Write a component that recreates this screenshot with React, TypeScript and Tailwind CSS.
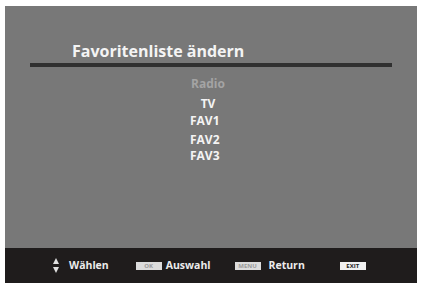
const font = { fontFamily: '"Open Sans", "Liberation Sans", sans-serif' }

function KeyBox({ label, dark }: { label: string; dark?: boolean }) {
  return (
    <span
      className={`flex h-[8px] w-[26px] items-center justify-center text-[6px] leading-none font-bold ${
        dark ? 'bg-[#f0f0f0] text-[#222]' : 'bg-[#dcdcdc] text-[#9a9a9a]'
      }`}
    >
      {label}
    </span>
  )
}

export default function App() {
  return (
    <div className="h-[284px] w-[421px] bg-white pt-[6px] pl-[5px]" style={font}>
      <div className="flex h-[277px] w-[412px] flex-col bg-[#787878]">
        <div className="flex-1">
          <h1 className="mt-[34px] ml-[67px] text-[16px] leading-[22px] font-bold text-[#f4f4f4]">
            Favoritenliste ändern
          </h1>
          <div className="mt-[1px] ml-[25px] h-[4px] w-[362px] bg-[#303030]" />
          <div className="mt-[10px] ml-[185px] flex w-[36px] flex-col text-[12px] leading-[13px] font-bold">
            <span className="text-center text-[#a4a4a4]">Radio</span>
            <span className="mt-[7px] text-center text-[#f4f4f4]">TV</span>
            <span className="mt-[4px] text-[#f4f4f4]">FAV1</span>
            <span className="mt-[5px] leading-[16px] text-[#f4f4f4]">FAV2</span>
            <span className="leading-[16px] text-[#f4f4f4]">FAV3</span>
          </div>
        </div>
        <div className="flex h-[35px] items-center bg-[#1f1c1c] text-[10.5px] font-bold text-[#ececec]">
          <svg className="ml-[48px]" width="6" height="15" viewBox="0 0 6 15">
            <path d="M3 0 L6 6 L0 6 Z" fill="#e0e0e0" />
            <path d="M0 9 L6 9 L3 15 Z" fill="#e0e0e0" />
          </svg>
          <span className="ml-[10px]">Wählen</span>
          <span className="ml-[27px]">
            <KeyBox label="OK" />
          </span>
          <span className="ml-[4px]">Auswahl</span>
          <span className="ml-[24px]">
            <KeyBox label="MENU" />
          </span>
          <span className="ml-[8px]">Return</span>
          <span className="ml-[35px]">
            <KeyBox label="EXIT" dark />
          </span>
        </div>
      </div>
    </div>
  )
}
